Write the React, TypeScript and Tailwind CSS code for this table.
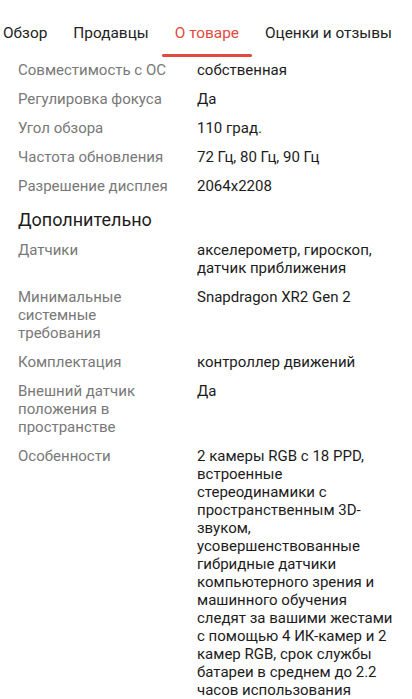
const tabs = ['Обзор', 'Продавцы', 'О товаре', 'Оценки и отзывы'];

const main: [string, string][] = [
  ['Совместимость с ОС', 'собственная'],
  ['Регулировка фокуса', 'Да'],
  ['Угол обзора', '110 град.'],
  ['Частота обновления', '72 Гц, 80 Гц, 90 Гц'],
  ['Разрешение дисплея', '2064x2208'],
];

const extra: [string, string][] = [
  ['Датчики', 'акселерометр, гироскоп, датчик приближения'],
  ['Минимальные системные требования', 'Snapdragon XR2 Gen 2'],
  ['Комплектация', 'контроллер движений'],
  ['Внешний датчик положения в пространстве', 'Да'],
  [
    'Особенности',
    '2 камеры RGB с 18 PPD, встроенные стереодинамики с пространственным 3D-звуком, усовершенствованные гибридные датчики компьютерного зрения и машинного обучения следят за вашими жестами с помощью 4 ИК-камер и 2 камер RGB, срок службы батареи в среднем до 2.2 часов использования',
  ],
];

const Row = ({ label, value }: { label: string; value: string }) => (
  <div className="flex pt-[4px] pb-[7px] text-[15px] leading-[18px]">
    <div className="w-[155px] shrink-0 text-[#787878]">{label}</div>
    <div className="ml-[24px] w-[196px] text-[#1c1c1c]">{value}</div>
  </div>
);

export default function App() {
  return (
    <div className="w-[412px] h-[699px] overflow-hidden bg-white" style={{ fontFamily: 'Roboto, "Noto Sans", sans-serif' }}>
      {/* Tabs */}
      <div className="flex h-[57px] ml-[-10px] whitespace-nowrap">
        {tabs.map((t) => {
          const active = t === 'О товаре';
          return (
            <div key={t} className="relative px-[13px] pt-[23px] text-[15.4px] leading-[20px]">
              <span className={active ? 'text-[#e14a3d]' : 'text-[#222222]'}>{t}</span>
              {active && <div className="absolute left-0 right-0 bottom-0 h-[3px] rounded-full bg-[#e14a3d]" />}
            </div>
          );
        })}
      </div>

      <div className="pl-[18px]">
        {main.map(([l, v]) => (
          <Row key={l} label={l} value={v} />
        ))}
        <h2 className="mt-[6px] mb-[5px] text-[18px] leading-[24px] text-[#1c1c1c]">Дополнительно</h2>
        {extra.map(([l, v]) => (
          <Row key={l} label={l} value={v} />
        ))}
      </div>
    </div>
  );
}
